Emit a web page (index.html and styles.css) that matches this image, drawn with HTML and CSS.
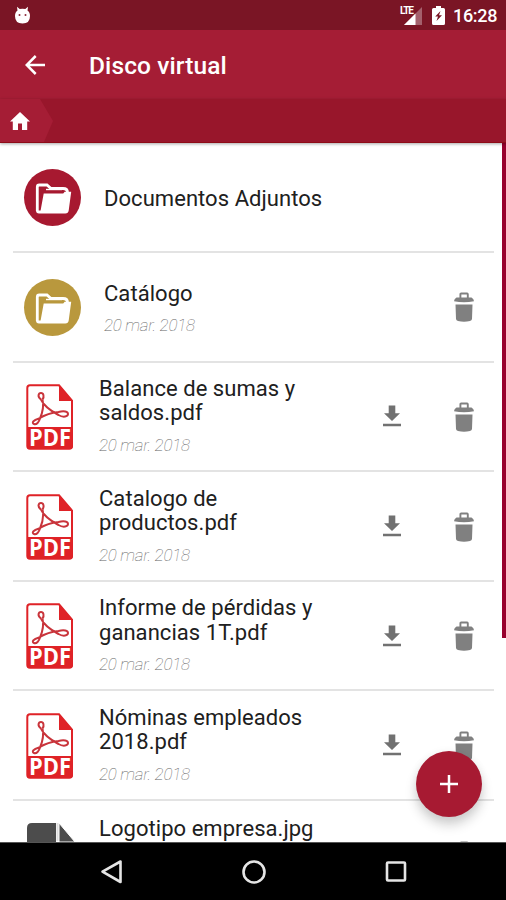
FILE: index.html
```html
<!DOCTYPE html>
<html lang="es">
<head>
<meta charset="utf-8">
<title>Disco virtual</title>
<link rel="stylesheet" href="styles.css">
</head>
<body>
<svg class="sprite" aria-hidden="true">
  <symbol id="folder" viewBox="0 0 57 57">
    <path d="M13.300 42V18q0-2 2-2H23l4 3.500H39q4.500 0 4.500 4" fill="none" stroke="#fff" stroke-width="2.800"/>
    <path d="M19.700 24.600h19.500l1.500-1.800h6.500L44.700 41.500q-.4 3-3.400 3H15q-3 0-3-3h4.600z" fill="#fff"/>
    <path d="M22 20.500h16" stroke="#fff" stroke-width="1.400"/>
  </symbol>
  <symbol id="pdf" viewBox="0 0 48 66">
    <path d="M4 1.300H33L46 16.500V62q0 2.700-2.700 2.700H4Q1.300 64.700 1.300 62V4Q1.300 1.300 4 1.300z" fill="#fff" stroke="#df2227" stroke-width="2"/>
    <path d="M33 1.300 46.500 17H33zM1 43H47V62q0 3-3 3H4q-3 0-3-3z" fill="#df2227"/>
    <path d="M15 15.500c-4-3-2.500-6.500 0-6.500s3.500 3.500 1.500 6.500M15 15.500q3.500 8 17.500 15.500c5 3 9.500 1.500 9.500-1s-4-3.500-9.500-2Q22 29 13 34.500C7 36 5.500 39 8 40s5-2 6-5.500Q18.500 24 16.500 15.500" fill="none" stroke="#c9343b" stroke-width="2"/>
    <text x="24" y="62" class="pdf-label" text-anchor="middle" textLength="42" lengthAdjust="spacingAndGlyphs">PDF</text>
  </symbol>
  <symbol id="trash" viewBox="0 0 20 30">
    <path d="M6.400 6V2.200q0-.7.700-.7h6q.7 0 .7.700V6" fill="none" stroke="#808080" stroke-width="1.900"/>
    <path d="M2.500 5.500h15q2.500 1.500 2.500 3.700-10 2.300-20 0 0-2.200 2.500-3.700zM1.500 12.500h17L18 27q-.2 1.500-2 2-6 1.300-12 0-1.800-.5-2-2z" fill="#808080"/>
  </symbol>
  <symbol id="download" viewBox="0 0 18 22">
    <path d="M5.700.500h6.600v7.700H17L9 16 1 8.200h4.700zM0 18.800h18v2.400H0z" fill="#717171"/>
  </symbol>
</svg>
<div class="screen">
  <header class="status">
    <svg class="droid" width="17" height="18" viewBox="0 0 17 18"><path d="M3.500 4.500 3 .700 5.700 3q2.800-.7 5.600 0L14 .700l-.5 3.800Q16 6 16 10q0 7.500-7.500 7.500T1 10q0-4 2.500-5.500z" fill="#fff"/><circle cx="5.500" cy="9" r="1" fill="#8b2638"/><circle cx="11.500" cy="9" r="1" fill="#8b2638"/></svg>
    <div class="signal"><span class="lte">LTE</span><svg width="19" height="18" viewBox="0 0 19 18"><path d="M19 0v18H1z" fill="#a4606c"/><path d="M12.500 6.500V18H1z" fill="#fff"/></svg></div>
    <svg class="battery" width="13" height="19" viewBox="0 0 13 19"><path d="M4 0h5v2h2.500q1.500 0 1.500 1.500v14q0 1.500-1.500 1.500h-10Q0 19 0 17.500v-14Q0 2 1.500 2H4z" fill="#fff"/><path d="M8.500 5 3.200 10.500H6L4.500 15 10 9.300H7z" fill="#7a1525"/></svg>
    <span class="clock">16:28</span>
  </header>
  <div class="toolbar">
    <svg width="20" height="20" viewBox="0 0 20 20"><path d="M20 10H1.700M10.700 1 1.700 10l9 9" fill="none" stroke="#fff" stroke-width="2.500"/></svg>
    <h1>Disco virtual</h1>
  </div>
  <nav class="crumbs">
    <div class="crumb"><svg width="20" height="18" viewBox="0 0 20 18"><path d="M10 0 20 9.500h-2.800V18H12v-6.500H8V18H2.800V9.500H0z" fill="#fff"/></svg></div>
  </nav>
  <main class="content">
    <ul class="list">
      <li class="row folder-row"><span class="disc red"><svg><use href="#folder"/></svg></span><div class="info"><p class="name">Documentos Adjuntos</p></div></li>
      <li class="row folder-row"><span class="disc gold"><svg><use href="#folder"/></svg></span><div class="info"><p class="name">Catálogo</p><p class="date">20 mar. 2018</p></div><svg class="trash"><use href="#trash"/></svg></li>
      <li class="row"><svg class="pdf"><use href="#pdf"/></svg><div class="info"><p class="name">Balance de sumas y<br>saldos.pdf</p><p class="date">20 mar. 2018</p></div><svg class="download"><use href="#download"/></svg><svg class="trash"><use href="#trash"/></svg></li>
      <li class="row"><svg class="pdf"><use href="#pdf"/></svg><div class="info"><p class="name">Catalogo de<br>productos.pdf</p><p class="date">20 mar. 2018</p></div><svg class="download"><use href="#download"/></svg><svg class="trash"><use href="#trash"/></svg></li>
      <li class="row"><svg class="pdf"><use href="#pdf"/></svg><div class="info"><p class="name">Informe de pérdidas y<br>ganancias 1T.pdf</p><p class="date">20 mar. 2018</p></div><svg class="download"><use href="#download"/></svg><svg class="trash"><use href="#trash"/></svg></li>
      <li class="row"><svg class="pdf"><use href="#pdf"/></svg><div class="info"><p class="name">Nóminas empleados<br>2018.pdf</p><p class="date">20 mar. 2018</p></div><svg class="download"><use href="#download"/></svg><svg class="trash"><use href="#trash"/></svg></li>
      <li class="row image-row"><svg class="file" viewBox="0 0 48 66"><path d="M5 0H29V19H48V62H0V5Q0 0 5 0z" fill="#4c4c4c"/><path d="M32 0 48 19H32z" fill="#4c4c4c" stroke="#fff" stroke-width="1"/><path d="M30.500 0v18" stroke="#ddd" stroke-width="2"/></svg><div class="info"><p class="name">Logotipo empresa.jpg</p></div><svg class="trash"><use href="#trash"/></svg></li>
    </ul>
    <span class="scrollbar"></span>
    <button class="fab" aria-label="Añadir"><svg width="18" height="18" viewBox="0 0 18 18"><path d="M9 0v18M0 9h18" stroke="#fff" stroke-width="2.500"/></svg></button>
  </main>
  <footer class="navbar">
    <svg width="24" height="26" viewBox="0 0 24 26"><path d="M20.500 2.500v20.500L2.500 12.700z"/></svg>
    <svg width="26" height="26" viewBox="0 0 26 26"><circle cx="13" cy="13" r="10.500"/></svg>
    <svg width="24" height="26" viewBox="0 0 24 26"><rect x="3" y="3.500" width="18" height="18" rx="1"/></svg>
  </footer>
</div>
</body>
</html>
```
FILE: styles.css
```css
* { box-sizing: border-box; }
body { margin: 0; font-family: Roboto, "Liberation Sans", sans-serif; background: #fff; }
h1, p, ul { margin: 0; padding: 0; }
svg { display: block; flex: none; }
.sprite { display: none; }
.screen { width: 506px; height: 900px; display: flex; flex-direction: column; overflow: hidden; }
.status { height: 30px; flex: none; background: #7a1525; display: flex; align-items: center; padding: 0 9px 0 14px; color: #fff; }
.droid { margin-top: -1px; }
.signal { margin-left: auto; display: flex; align-items: flex-start; width: 22px; height: 19px; }
.lte { font-size: 10px; line-height: 9px; font-weight: 700; letter-spacing: -1.100px; width: 4px; white-space: nowrap; z-index: 1; }
.signal svg { margin-top: 1px; margin-left: -1px; }
.battery { margin-left: 10px; }
.clock { font-size: 18px; font-weight: 500; line-height: 30px; width: 44px; margin-left: 8px; margin-top: 2px; white-space: nowrap; letter-spacing: -.3px; }
.toolbar { height: 69px; flex: none; background: #a51d35; display: flex; align-items: center; padding-left: 25px; color: #fff; }
.toolbar h1 { font-size: 24.500px; font-weight: 500; line-height: 30px; margin-left: 44px; margin-top: 2px; letter-spacing: .1px; }
.crumbs { height: 44px; flex: none; background: #98162b; border-bottom: 1px solid #8e0c18; display: flex; position: relative; z-index: 2; box-shadow: 0 1px 3px rgba(0,0,0,.35); }
.crumb { width: 53px; background: #a51d35; clip-path: polygon(0 0, 40px 0, 53px 22px, 44px 100%, 0 100%); padding: 13px 0 0 10px; }
.content { flex: 1; min-height: 0; position: relative; overflow: hidden; background: #fff; }
.list { list-style: none; padding: .5px 12px 0 13px; }
.row { height: 109.600px; border-bottom: 2px solid #e3e3e3; display: flex; align-items: center; padding: 1px 20px 0 13px; }
.folder-row { padding-left: 11px; }
.disc { width: 57px; height: 57px; border-radius: 50%; flex: none; }
.disc svg { width: 57px; height: 57px; }
.red { background: #a71930; }
.gold { background: #b9983d; }
.info { flex: 1; margin-left: 25px; margin-top: -2px; white-space: nowrap; }
.folder-row .info { margin-left: 23px; margin-top: 2px; }
.name { font-size: 22px; line-height: 24.500px; letter-spacing: .05px; color: #202020; }
.date { font-size: 17px; line-height: 20px; margin-top: 9px; font-style: italic; font-weight: 100; letter-spacing: -.25px; color: #666; }
.pdf { width: 48px; height: 66px; }
.pdf-label { font-family: "Open Sans", sans-serif; font-size: 23.500px; font-weight: 700; fill: #fff; }
.trash { width: 20px; height: 30px; }
.download { width: 18px; height: 22px; margin-right: 53px; margin-top: -1px; }
.image-row { align-items: flex-start; border: 0; padding-top: 16px; }
.file { width: 48px; height: 66px; margin-top: 6px; margin-left: 1px; }
.image-row .info { margin-left: 24px; margin-top: 0; }
.image-row .trash { margin-top: 24px; }
.scrollbar { position: absolute; right: 0; top: 0; width: 4px; height: 495px; background: #98002d; }
.fab { position: absolute; left: 416px; top: 608px; width: 66px; height: 66px; border: 0; border-radius: 50%; background: #a71a32; display: grid; place-items: center; padding: 0; box-shadow: 0 8px 12px rgba(0,0,0,.18), 0 1px 10px rgba(0,0,0,.06); }
.navbar { height: 58px; flex: none; background: #000; border-top: 1px solid #555; display: flex; align-items: center; justify-content: space-between; padding: 0 98px 0 100px; }
.navbar svg { fill: none; stroke: #e5e5e5; stroke-width: 2.600; stroke-linejoin: round; }
```
